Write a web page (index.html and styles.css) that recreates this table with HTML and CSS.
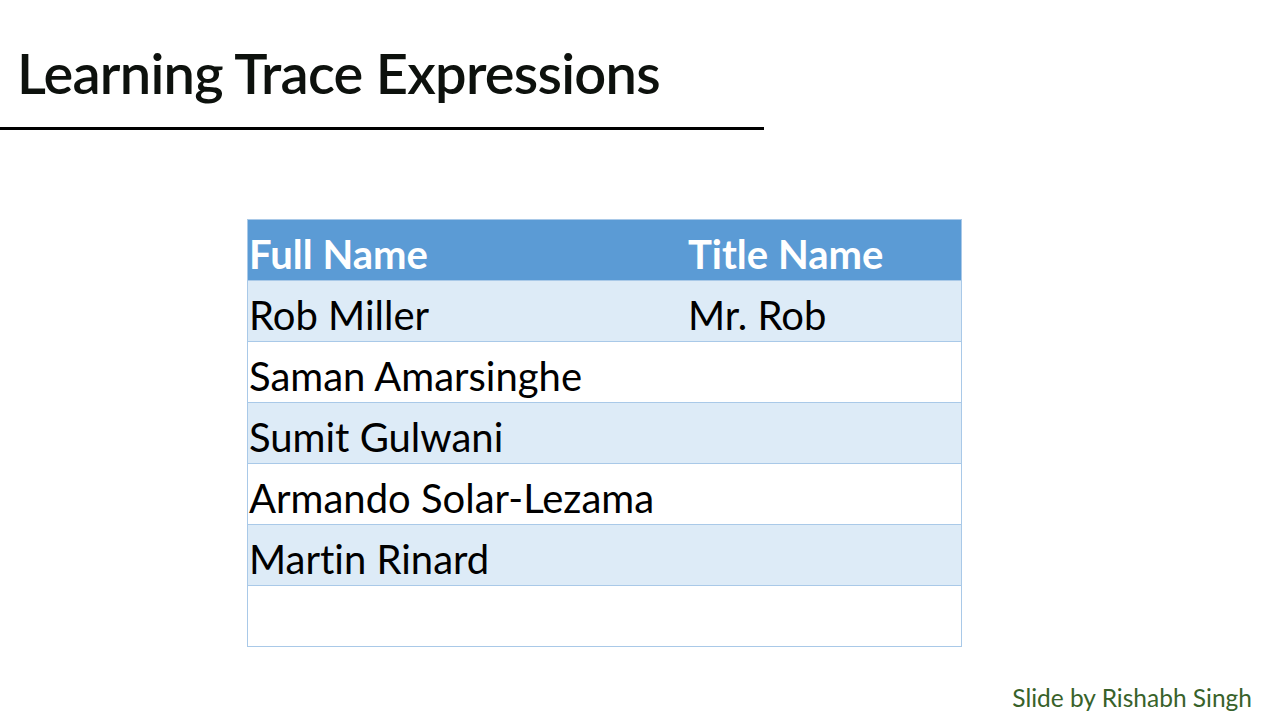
FILE: index.html
```html
<!DOCTYPE html>
<html>
<head>
<meta charset="utf-8">
<link rel="stylesheet" href="styles.css">
</head>
<body>
<div class="slide">
  <header class="head">
    <h1 class="title">Learning Trace Expressions</h1>
    <div class="rule"></div>
  </header>
  <main class="content">
    <div class="table">
      <div class="row hdr"><div class="c1">Full Name</div><div class="c2">Title Name</div></div>
      <div class="row band"><div class="c1">Rob Miller</div><div class="c2">Mr. Rob</div></div>
      <div class="row"><div class="c1">Saman Amarsinghe</div><div class="c2"></div></div>
      <div class="row band"><div class="c1">Sumit Gulwani</div><div class="c2"></div></div>
      <div class="row"><div class="c1">Armando Solar-Lezama</div><div class="c2"></div></div>
      <div class="row band"><div class="c1">Martin Rinard</div><div class="c2"></div></div>
      <div class="row"><div class="c1"></div><div class="c2"></div></div>
    </div>
  </main>
  <footer class="credit">Slide by Rishabh Singh</footer>
</div>
</body>
</html>
```
FILE: styles.css
```css
* { box-sizing: border-box; }
html, body { margin: 0; padding: 0; background: #fff; }
.slide {
  width: 1280px;
  height: 720px;
  position: relative;
  display: flex;
  flex-direction: column;
  font-family: "Lato", "Open Sans", "Liberation Sans", sans-serif;
  font-variant-ligatures: none;
}
.head { padding-top: 37px; }
.title {
  margin: 0 0 0 17px;
  font-family: "Lato", "Liberation Sans", sans-serif;
  font-weight: 600;
  font-size: 56px;
  line-height: 72px;
  color: #0d110d;
  letter-spacing: -0.75px;
}
.rule {
  margin-top: 18px;
  width: 764px;
  height: 3px;
  background: #000;
}
.content {
  padding-top: 89px;
  padding-left: 247px;
}
.table {
  width: 715px;
  border: 1px solid #a9c9e8;
}
.row {
  display: flex;
  height: 61px;
  border-top: 1px solid #a9c9e8;
  align-items: center;
  font-size: 40px;
  color: #000;
  padding-top: 8px;
}
.row:first-child { border-top: none; height: 60px; }
.hdr { background: #5b9bd5; color: #fff; font-weight: 700; }
.band { background: #ddebf7; }
.c1 { width: 440px; padding-left: 1px; white-space: nowrap; }
.c2 { flex: 1; white-space: nowrap; }
.credit {
  position: absolute;
  right: 28px;
  bottom: 8px;
  font-size: 24.5px;
  color: #38622a;
}
```
